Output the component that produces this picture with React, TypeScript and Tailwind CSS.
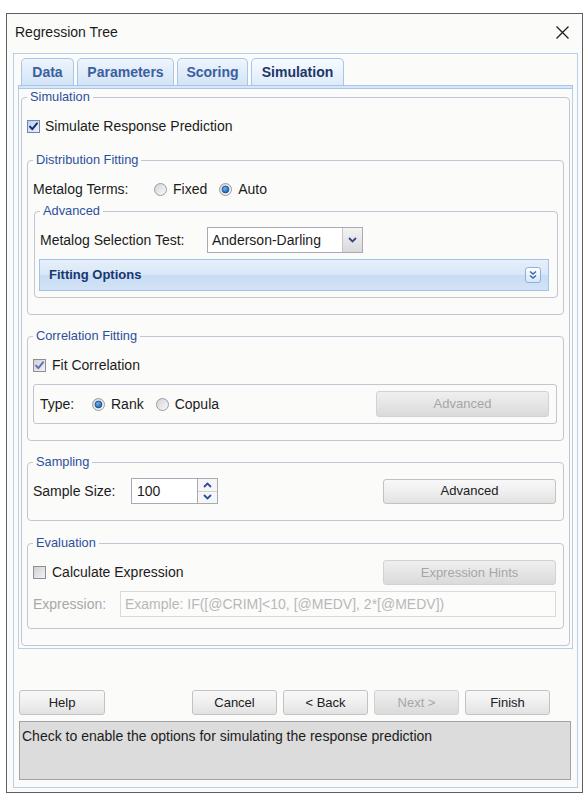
import React from 'react';
import clsx from 'clsx';

// ─── 小部件 ──────────────────────────────────────────────

function GroupBox({
  title,
  className,
  children,
}: {
  title: string;
  className?: string;
  children: React.ReactNode;
}) {
  return (
    <fieldset className={clsx('rounded-[4px] border border-[#c4c4d2] px-[5px]', className)}>
      <legend className="px-[3px] text-[12.8px] leading-[16px] text-[#2d4f9e]">{title}</legend>
      {children}
    </fieldset>
  );
}

function CheckBox({ state }: { state: 'on' | 'soft' | 'off' }) {
  const border = state === 'on' ? '#6d86b3' : '#8e8e96';
  const mark = state === 'on' ? '#17296a' : '#5c72ad';
  return (
    <svg width="13" height="13" viewBox="0 0 13 13" className="shrink-0">
      <defs>
        <linearGradient id={`cb-${state}`} x1="0" y1="0" x2="1" y2="1">
          <stop offset="0" stopColor={state === 'on' ? '#b9cdec' : '#cfcfd4'} />
          <stop offset="1" stopColor={state === 'on' ? '#eef4fc' : '#f4f4f6'} />
        </linearGradient>
      </defs>
      <rect x="0.5" y="0.5" width="12" height="12" fill={`url(#cb-${state})`} stroke={border} />
      {state !== 'off' && (
        <path d="M3 6.6 L5.3 9.2 L10 3.3" fill="none" stroke={mark} strokeWidth="1.9" strokeLinecap="round" strokeLinejoin="round" />
      )}
    </svg>
  );
}

function Radio({ on }: { on?: boolean }) {
  return (
    <svg width="13" height="13" viewBox="0 0 13 13" className="shrink-0">
      <defs>
        <linearGradient id="rb" x1="0" y1="0" x2="1" y2="1">
          <stop offset="0" stopColor="#d2d2d6" />
          <stop offset="1" stopColor="#fbfbfb" />
        </linearGradient>
        <radialGradient id="rdot" cx="0.4" cy="0.35" r="0.7">
          <stop offset="0" stopColor="#6fb4f2" />
          <stop offset="1" stopColor="#0f5cae" />
        </radialGradient>
      </defs>
      <circle cx="6.5" cy="6.5" r="6" fill="url(#rb)" stroke="#9b9ba3" />
      {on && <circle cx="6.5" cy="6.5" r="3.4" fill="url(#rdot)" stroke="#1b4a86" strokeWidth="0.8" />}
    </svg>
  );
}

function Button({
  label,
  disabled,
  className,
}: {
  label: string;
  disabled?: boolean;
  className?: string;
}) {
  return (
    <div
      className={clsx(
        'flex h-[25px] items-center justify-center rounded-[3px] border text-[13px]',
        disabled
          ? 'border-[#d2d2d2] bg-[linear-gradient(to_bottom,#efefef_0%,#e6e6e6_45%,#dadada_100%)] text-[#a6a6a6]'
          : 'border-[#c2c2c2] bg-[linear-gradient(to_bottom,#f8f8f8_0%,#f0f0f0_45%,#e2e2e2_100%)] text-[#202020]',
        className,
      )}
    >
      {label}
    </div>
  );
}

function Chevron({ up, color = '#2b4a8b' }: { up?: boolean; color?: string }) {
  return (
    <svg width="9" height="6" viewBox="0 0 9 6">
      <path
        d={up ? 'M1 5 L4.5 1.5 L8 5' : 'M1 1 L4.5 4.5 L8 1'}
        fill="none"
        stroke={color}
        strokeWidth="1.8"
      />
    </svg>
  );
}

// ─── 组件 ──────────────────────────────────────────────────

const TABS = [
  { name: 'Data', w: 'w-[53px]' },
  { name: 'Parameters', w: 'w-[97px]' },
  { name: 'Scoring', w: 'w-[71px]' },
  { name: 'Simulation', w: 'w-[93px]', active: true },
];

export default function App() {
  return (
    <div className="h-[793px] w-[585px] overflow-hidden bg-white pl-[6px] pt-[13px] font-['Liberation_Sans',Arial,sans-serif] text-[#1b1b1b]">
      <div className="flex h-[780px] w-[577px] flex-col border border-[#5f5f5f] bg-[#fbfbf9]">
        {/* 标题栏 */}
        <div className="flex h-[34px] items-center justify-between pl-[8px] pr-[13px] pt-[2px]">
          <span className="text-[14px]">Regression Tree</span>
          <svg width="13" height="13" viewBox="0 0 13 13">
            <path d="M0.5 0.5 L12.5 12.5 M12.5 0.5 L0.5 12.5" stroke="#1e1e1e" strokeWidth="1.3" />
          </svg>
        </div>

        {/* 外框 */}
        <div className="ml-[6px] mt-[5px] flex w-[565px] flex-col border border-[#b6cfea] pb-[7px] pl-[4px] pt-[4px]">
          {/* 标签页 */}
          <div className="flex h-[27px] gap-[3px] pl-[3px]">
            {TABS.map((t) => (
              <div
                key={t.name}
                className={clsx(
                  'flex items-center justify-center rounded-t-[5px] border border-b-0 border-[#a9c5e7] text-[14px] font-bold',
                  t.w,
                  t.active
                    ? 'bg-[linear-gradient(to_bottom,#f7fbff,#dfebf9)] text-[#1d3668]'
                    : 'bg-[linear-gradient(to_bottom,#eef5fd,#d3e4f6)] text-[#3a60a0]',
                )}
              >
                {t.name}
              </div>
            ))}
          </div>

          {/* 内容面板 */}
          <div className="w-[555px]">
            <div className="h-[4px] border-y border-x border-[#a9c5e7] bg-[#d8e7f8]" />
            <div className="h-[560px] border-x border-b border-[#b6cfea] px-[2px] pb-[2px]">
              <GroupBox title="Simulation" className="pb-[16px]">
                <div className="mt-[11px] flex h-[20px] items-center gap-[5px] text-[14px]">
                  <CheckBox state="on" />
                  <span>Simulate Response Prediction</span>
                </div>

                {/* Distribution Fitting */}
                <GroupBox title="Distribution Fitting" className="mt-[16px] pb-[16px]">
                  <div className="mt-[11px] flex h-[20px] items-center text-[14px]">
                    <span className="w-[121px]">Metalog Terms:</span>
                    <Radio />
                    <span className="ml-[6px]">Fixed</span>
                    <span className="ml-[12px]">
                      <Radio on />
                    </span>
                    <span className="ml-[6px]">Auto</span>
                  </div>

                  <GroupBox title="Advanced" className="ml-[1px] mt-[4px] pb-[6px]">
                    <div className="mt-[8px] flex h-[26px] items-center text-[14px]">
                      <span className="w-[167px]">Metalog Selection Test:</span>
                      <div className="flex h-[26px] w-[156px] border border-[#aaaab6] bg-white">
                        <span className="flex flex-1 items-center pl-[4px]">Anderson-Darling</span>
                        <div className="flex w-[20px] items-center justify-center border-l border-[#c6c6cc] bg-[linear-gradient(to_bottom,#f3f3f3,#d9d9dc)]">
                          <Chevron />
                        </div>
                      </div>
                    </div>

                    <div className="-ml-[1px] mr-[3px] mt-[6px] flex h-[32px] items-center justify-between border border-[#a3c2e8] bg-[linear-gradient(to_bottom,#e6effa_0%,#d9e7f8_48%,#c8dcf3_52%,#d3e3f6_100%)] pl-[9px] pr-[7px]">
                      <span className="text-[13px] font-bold text-[#17376f]">Fitting Options</span>
                      <svg width="16" height="16" viewBox="0 0 16 16">
                        <defs>
                          <linearGradient id="fo" x1="0" y1="0" x2="0" y2="1">
                            <stop offset="0" stopColor="#ffffff" />
                            <stop offset="1" stopColor="#d6e5f7" />
                          </linearGradient>
                        </defs>
                        <rect x="0.5" y="0.5" width="15" height="15" rx="2.5" fill="url(#fo)" stroke="#8eb0dc" />
                        <path d="M5 4.5 L8 7 L11 4.5 M5 8.5 L8 11 L11 8.5" fill="none" stroke="#3d68a8" strokeWidth="1.5" />
                      </svg>
                    </div>
                  </GroupBox>
                </GroupBox>

                {/* Correlation Fitting */}
                <GroupBox title="Correlation Fitting" className="mt-[13px] pb-[16px]">
                  <div className="mt-[11px] flex h-[20px] items-center gap-[6px] text-[14px]">
                    <CheckBox state="soft" />
                    <span>Fit Correlation</span>
                  </div>
                  <div className="mr-[1px] mt-[9px] flex h-[40px] items-center rounded-[3px] border border-[#c4c4d2] pl-[6px] pr-[7px] text-[14px]">
                    <span className="w-[52px]">Type:</span>
                    <Radio on />
                    <span className="ml-[6px]">Rank</span>
                    <span className="ml-[12px]">
                      <Radio />
                    </span>
                    <span className="ml-[6px]">Copula</span>
                    <Button label="Advanced" disabled className="ml-auto h-[26px] w-[173px]" />
                  </div>
                </GroupBox>

                {/* Sampling */}
                <GroupBox title="Sampling" className="mt-[13px] pb-[16px]">
                  <div className="mt-[8px] flex h-[26px] items-center pr-[2px] text-[14px]">
                    <span className="w-[98px]">Sample Size:</span>
                    <div className="flex h-[26px]">
                      <div className="flex w-[67px] items-center border border-[#a9a9b6] bg-white pl-[5px]">100</div>
                      <div className="flex w-[20px] flex-col border border-l-0 border-[#a9a9b6] bg-[#f6f6f6]">
                        <div className="flex flex-1 items-center justify-center border-b border-[#cfcfd6]">
                          <Chevron up color="#2a4f9b" />
                        </div>
                        <div className="flex flex-1 items-center justify-center">
                          <Chevron color="#2a4f9b" />
                        </div>
                      </div>
                    </div>
                    <Button label="Advanced" className="ml-auto w-[173px]" />
                  </div>
                </GroupBox>

                {/* Evaluation */}
                <GroupBox title="Evaluation" className="mt-[14px] pb-[11px]">
                  <div className="mt-[9px] flex h-[25px] items-center pr-[2px] text-[14px]">
                    <CheckBox state="off" />
                    <span className="ml-[6px]">Calculate Expression</span>
                    <Button label="Expression Hints" disabled className="ml-auto w-[173px]" />
                  </div>
                  <div className="mt-[6px] flex h-[26px] items-center pr-[2px] text-[14px] text-[#a8a8a8]">
                    <span className="w-[87px]">Expression:</span>
                    <div className="flex h-[26px] flex-1 items-center border border-[#dadada] bg-[#fcfcfb] pl-[4px] text-[#b8b8b8]">
                      Example: IF([@CRIM]&lt;10, [@MEDV], 2*[@MEDV])
                    </div>
                  </div>
                </GroupBox>
              </GroupBox>
            </div>
          </div>

          {/* 底部按钮 */}
          <div className="mt-[41px] flex pl-[1px]">
            <Button label="Help" className="w-[86px]" />
            <div className="ml-[87px] flex gap-[6px]">
              <Button label="Cancel" className="w-[85px]" />
              <Button label="< Back" className="w-[85px]" />
              <Button label="Next >" disabled className="w-[85px]" />
              <Button label="Finish" className="w-[85px]" />
            </div>
          </div>

          {/* 提示框 */}
          <div className="ml-[1px] mt-[6px] h-[59px] w-[552px] border border-[#a3a3a3] bg-[#dcdcdc] pl-[2px] pt-[5px] text-[14px] leading-[18px]">
            Check to enable the options for simulating the response prediction
          </div>
        </div>
      </div>
    </div>
  );
}
